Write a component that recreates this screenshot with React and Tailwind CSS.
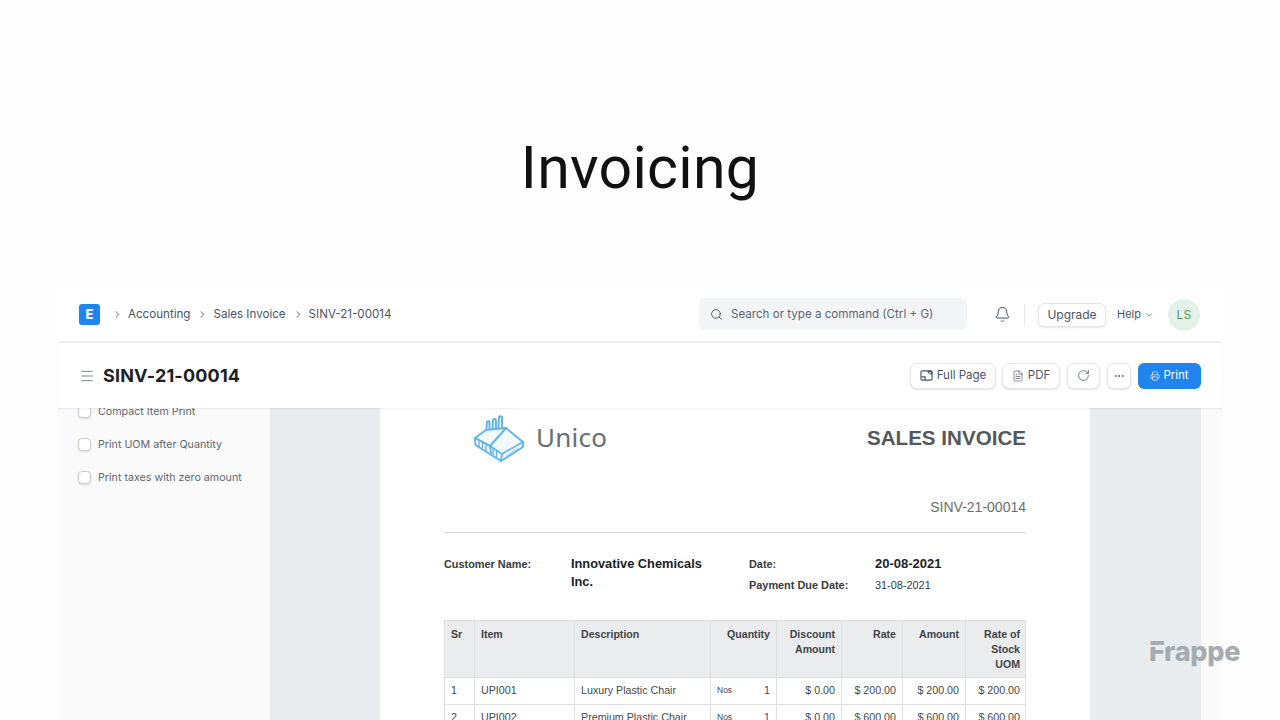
import React from 'react';
import { ChevronRight, ChevronDown, Search, Bell, FileText, RotateCw, Ellipsis, Printer, Menu } from 'lucide-react';

const sans = "font-['Inter','Noto_Sans',sans-serif]";

const rows = [
  { sr: 1, item: 'UPI001', desc: 'Luxury Plastic Chair', qty: 1, disc: '$ 0.00', rate: '$ 200.00', amount: '$ 200.00', stock: '$ 200.00' },
  { sr: 2, item: 'UPI002', desc: 'Premium Plastic Chair', qty: 1, disc: '$ 0.00', rate: '$ 600.00', amount: '$ 600.00', stock: '$ 600.00' },
];

function FullPageIcon() {
  return (
    <svg width="13" height="13" viewBox="0 0 14 14" fill="none" stroke="#4b5563" strokeWidth="1.2">
      <rect x="1" y="2" width="12" height="10" rx="1.5" />
      <path d="M1.5 8.5 H5.5 V12 M8 2.5 L12.5 6 M9 2.5 H12.5 V5.5" />
    </svg>
  );
}

function UnicoLogo() {
  return (
    <svg width="52" height="48" viewBox="0 0 52 48" fill="none" stroke="#62b4ea" strokeWidth="1.9" strokeLinejoin="round" strokeLinecap="round">
      {/* chimneys */}
      <path d="M13 19 L14 7 Q15 5 16.500 7 L16.500 20 M19 20 L20 5 Q21.500 3 23 5 L23 21 M25 21 L26 2 Q27.500 0.500 29 2 L29 19" fill="#e3f2fc" />
      {/* roof and walls */}
      <path d="M2 23 L13 15 L33 13 L50 27 L29 39 L17 31 Z" fill="#f2f9fe" />
      <path d="M2 23 L2.500 30 L28 46 L50 32 L50 27" />
      <path d="M2 23 L17 31 L18 38 M29 39 L28 46 M17 31 L33 13" />
      {/* windows */}
      <path d="M6 27 V32 M9.500 28.500 V34.500 M13 30.500 V36.500 M20 34 V41 M23.500 36 V43" strokeWidth="1.400" />
      <path d="M33 41 L45 33 M33 37 L45 29.500" strokeWidth="1" stroke="#8cc8f0" />
    </svg>
  );
}

function Check({ label }) {
  return (
    <div className="flex items-center gap-[7px] h-[33px]">
      <span className="w-[13px] h-[13px] rounded-[4px] border border-[#c9ced4] bg-white shadow-sm" />
      <span className="mt-[2px] text-[10.7px] text-[#5e6771]">{label}</span>
    </div>
  );
}

function ToolButton({ children, className = '' }) {
  return (
    <button className={`h-[26px] flex items-center justify-center rounded-[7px] bg-white border border-[#e4e6e9] shadow-[0_1px_2px_rgba(0,0,0,0.12)] text-[11.5px] text-[#4b5563] ${className}`}>
      {children}
    </button>
  );
}

export default function App() {
  const th = "border border-[#dcdee0] align-top pt-[6px] px-[6px] text-[10.6px] leading-[15px] font-bold text-[#404448]";
  const td = "border border-[#dcdee0] px-[6px] pb-[2px] h-[27px] text-[10.7px] text-[#45494d] font-normal";

  return (
    <div className={`relative w-[1280px] h-[720px] overflow-hidden bg-[#fefefe] flex flex-col ${sans}`}>
      {/* Slide title */}
      <div className="h-[292px] shrink-0 flex justify-center pt-[133px]">
        <h1 className="text-[59px] leading-[70px] font-normal text-[#111] font-['Roboto',sans-serif] tracking-[0.005em]">Invoicing</h1>
      </div>

      <div className="mx-[58px] flex-1 min-h-0 flex flex-col">
        {/* Navbar */}
        <div className="h-[51px] shrink-0 bg-white border-b-2 border-[#eff0f1] flex items-center pl-[21px] pr-[22px] pb-[4px]">
          <span className="w-[21px] h-[21px] rounded-[3px] bg-[#1f84ee] flex items-center justify-center text-white text-[13px] font-extrabold leading-none">E</span>
          <div className="flex items-center text-[11.6px] text-[#4b5563] ml-[12px]">
            <ChevronRight size={11} strokeWidth={1.8} />
            <span className="ml-[5px]">Accounting</span>
            <ChevronRight size={11} strokeWidth={1.8} className="ml-[7px]" />
            <span className="ml-[5px]">Sales Invoice</span>
            <ChevronRight size={11} strokeWidth={1.8} className="ml-[7px]" />
            <span className="ml-[5px]">SINV-21-00014</span>
          </div>
          <div className="ml-auto w-[268px] h-[32px] -mt-[1px] rounded-[6px] bg-[#f3f4f6] flex items-center pl-[11px] text-[11.6px] text-[#5e6771]">
            <Search size={13} strokeWidth={1.5} className="text-[#374151]" />
            <span className="ml-[8px] mt-[2px]">Search or type a command (Ctrl + G)</span>
          </div>
          <Bell size={17} strokeWidth={1.3} className="ml-[27px] text-[#374151]" />
          <span className="w-px h-[21px] bg-[#e5e7eb] ml-[13px]" />
          <button className="ml-[13px] w-[68px] h-[24px] rounded-[6px] bg-white border border-[#e4e6e9] shadow-[0_1px_2px_rgba(0,0,0,0.1)] text-[12px] text-[#4b5563]">Upgrade</button>
          <span className="ml-[11px] text-[11px] text-[#4b5563]">Help</span>
          <ChevronDown size={10} strokeWidth={1.8} className="ml-[3px] text-[#4b5563]" />
          <span className="ml-[14px] w-[32px] h-[32px] rounded-full bg-[#e4f1e7] flex items-center justify-center text-[12px] text-[#48a063] tracking-wide">LS</span>
        </div>

        {/* Page head */}
        <div className="relative z-10 h-[65px] shrink-0 bg-white shadow-[0_1px_2px_rgba(0,0,0,0.08)] flex items-center pl-[21px] pr-[21px]">
          <Menu size={16} strokeWidth={1.3} className="text-[#6b7280]" />
          <span className="ml-[8px] text-[18px] font-bold text-[#1c2126] tracking-[0.01em]">SINV-21-00014</span>
          <div className="ml-auto flex items-center gap-[7px]">
            <ToolButton className="w-[86px] gap-[4px]"><FullPageIcon />Full Page</ToolButton>
            <ToolButton className="w-[58px] -ml-[1px] gap-[4px]"><FileText size={12} strokeWidth={1.3} />PDF</ToolButton>
            <ToolButton className="w-[33px]"><RotateCw size={13} strokeWidth={1.4} /></ToolButton>
            <ToolButton className="w-[24px]"><Ellipsis size={12} strokeWidth={1.8} /></ToolButton>
            <button className="h-[26px] w-[63px] rounded-[6px] bg-[#1f84ee] flex items-center justify-center gap-[3px] text-[11.5px] text-white">
              <Printer size={10} strokeWidth={1.5} />Print
            </button>
          </div>
        </div>

        {/* Body */}
        <div className="flex-1 min-h-0 flex overflow-hidden">
          <div className="w-[212px] shrink-0 bg-[#fafafa] pl-[20px] -mt-[13px]">
            <Check label="Compact Item Print" />
            <Check label="Print UOM after Quantity" />
            <Check label="Print taxes with zero amount" />
          </div>
          <div className="w-[110px] shrink-0 bg-[#e9ecef]" />

          {/* Print preview sheet */}
          <div className="w-[710px] shrink-0 bg-white pl-[64px] pr-[64px] font-['Liberation_Sans',sans-serif]">
            <div className="h-[125px] border-b border-[#d5d7da] flex flex-col">
              <div className="flex items-start justify-between">
                <div className="flex items-center ml-[29px] mt-[7px]">
                  <UnicoLogo />
                  <span className="ml-[11px] -mt-[4px] text-[26px] leading-[30px] text-[#6a6e72] font-['Noto_Sans',sans-serif] tracking-[0.01em]">Unico</span>
                </div>
                <span className="mt-[17px] text-[20.6px] leading-[26px] font-bold text-[#54585c]">SALES INVOICE</span>
              </div>
              <span className="self-end mt-auto mb-[17px] text-[14px] leading-[16px] text-[#6a6e72]">SINV-21-00014</span>
            </div>

            <div className="flex mt-[23px] h-[64px]">
              <span className="w-[127px] mt-[1px] text-[10.9px] leading-[14px] font-bold text-[#363b40]">Customer Name:</span>
              <span className="w-[178px] -mt-[1px] pr-[30px] text-[12.8px] leading-[18px] font-bold text-[#1c2126]">Innovative Chemicals Inc.</span>
              <div className="flex-1 -mt-[2px]">
                <div className="flex items-center">
                  <span className="w-[126px] text-[10.9px] font-bold text-[#363b40]">Date:</span>
                  <span className="text-[13px] font-bold text-[#1c2126]">20-08-2021</span>
                </div>
                <div className="flex items-center mt-[3px]">
                  <span className="w-[126px] text-[10.9px] font-bold text-[#363b40]">Payment Due Date:</span>
                  <span className="text-[10.9px] text-[#363b40]">31-08-2021</span>
                </div>
              </div>
            </div>

            <table className="table-fixed w-[581px] border-collapse">
              <colgroup>
                <col className="w-[30px]" />
                <col className="w-[100px]" />
                <col className="w-[136px]" />
                <col className="w-[66px]" />
                <col className="w-[65px]" />
                <col className="w-[61px]" />
                <col className="w-[63px]" />
                <col className="w-[60px]" />
              </colgroup>
              <thead>
                <tr className="h-[57px] bg-[#ebecee]">
                  <th className={`${th} text-left`}>Sr</th>
                  <th className={`${th} text-left`}>Item</th>
                  <th className={`${th} text-left`}>Description</th>
                  <th className={`${th} text-right`}>Quantity</th>
                  <th className={`${th} text-right`}>Discount Amount</th>
                  <th className={`${th} text-right`}>Rate</th>
                  <th className={`${th} text-right`}>Amount</th>
                  <th className={`${th} text-right pr-[5px]`}>Rate of Stock UOM</th>
                </tr>
              </thead>
              <tbody>
                {rows.map((r) => (
                  <tr key={r.sr}>
                    <td className={td}>{r.sr}</td>
                    <td className={td}>{r.item}</td>
                    <td className={`${td} whitespace-nowrap`}>{r.desc}</td>
                    <td className={td}>
                      <div className="flex items-center justify-between">
                        <span className="text-[8.5px]">Nos</span>
                        <span>{r.qty}</span>
                      </div>
                    </td>
                    <td className={`${td} text-right`}>{r.disc}</td>
                    <td className={`${td} text-right`}>{r.rate}</td>
                    <td className={`${td} text-right`}>{r.amount}</td>
                    <td className={`${td} text-right pr-[5px]`}>{r.stock}</td>
                  </tr>
                ))}
              </tbody>
            </table>
          </div>

          <div className="w-[111px] shrink-0 bg-[#e9ecef]" />
          <div className="flex-1 bg-[#fafafa]" />
        </div>
      </div>

      {/* Watermark */}
      <span className="absolute left-[1149px] top-[635px] text-[27px] leading-[34px] font-extrabold text-[#a5abb0] tracking-[-0.01em] font-['Inter',sans-serif]">Frappe</span>
      <span className="absolute left-[1149px] top-[645px] w-[18px] h-[2px] bg-[#e9ecef]" />
    </div>
  );
}
